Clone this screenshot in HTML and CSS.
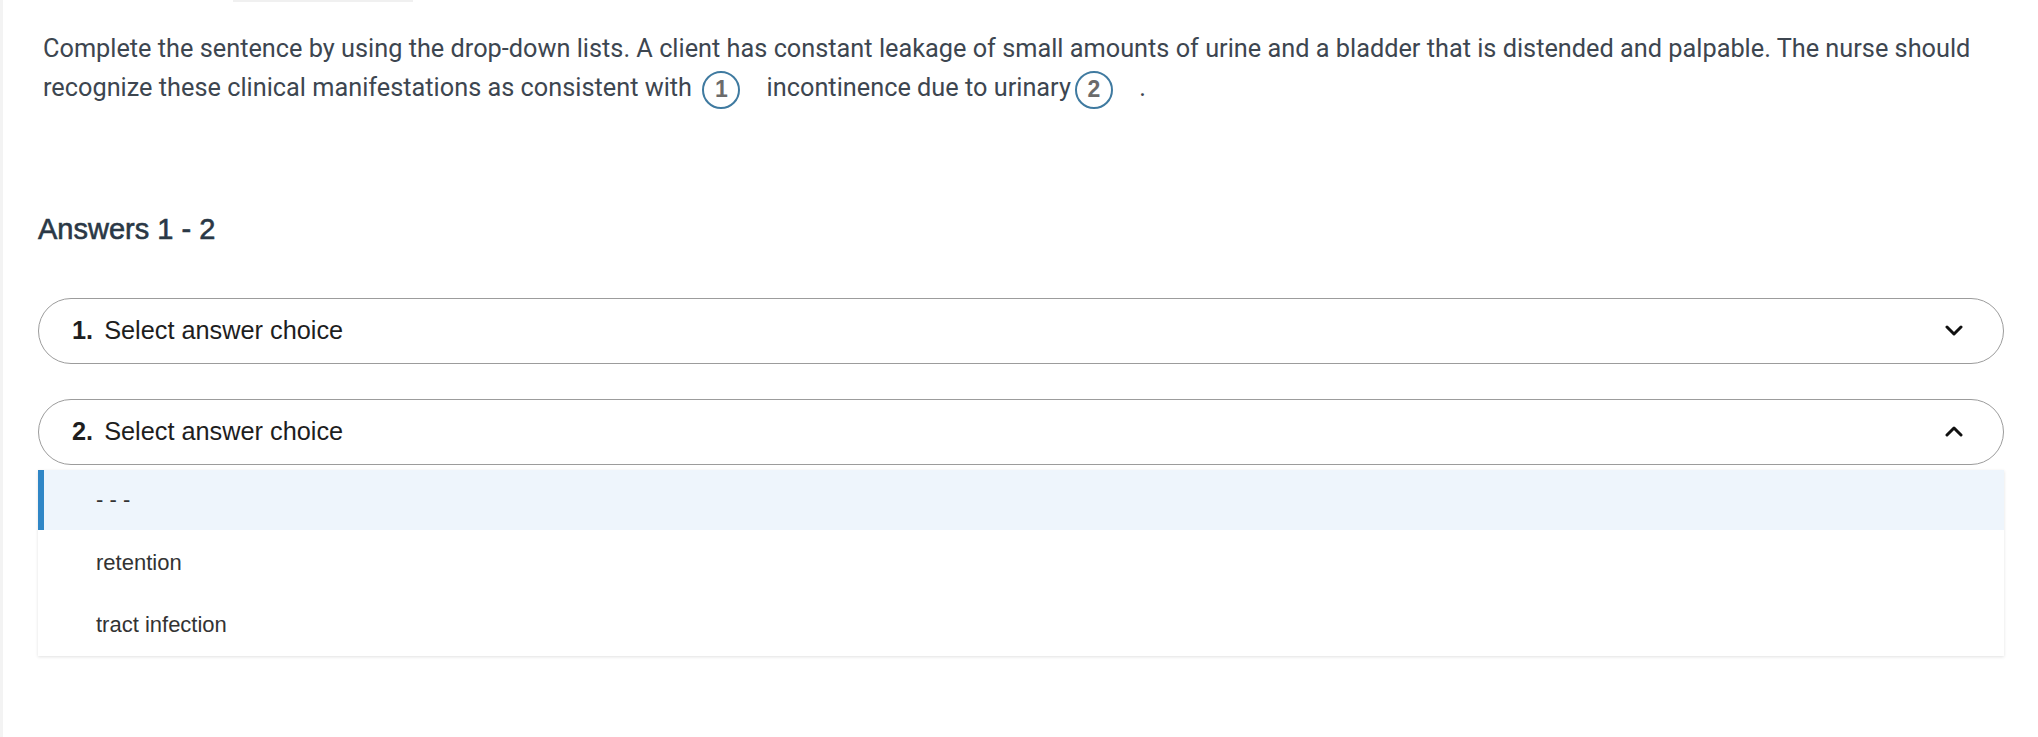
FILE: index.html
```html
<!DOCTYPE html>
<html lang="en">
<head>
<meta charset="utf-8">
<title>Drop-down question</title>
<link rel="stylesheet" href="styles.css">
</head>
<body>
<div class="page">
  <div class="topmark"></div>
  <p class="stem">Complete the sentence by using the drop-down lists. A client has constant leakage of small amounts of urine and a bladder that is distended and palpable. The nurse should recognize these clinical manifestations as consistent with <span class="blank"><span class="num">1</span></span> incontinence due to urinary<span class="blank"><span class="num">2</span></span> .</p>

  <h2 class="answers-title">Answers 1 - 2</h2>

  <div class="select">
    <span class="select-label"><b>1.</b> Select answer choice</span>
    <svg class="chev" width="18" height="11" viewBox="0 0 18 11"><path d="M2 2 L9 9 L16 2" fill="none" stroke="#111" stroke-width="3" stroke-linecap="round" stroke-linejoin="round"/></svg>
  </div>

  <div class="select select-open">
    <span class="select-label"><b>2.</b> Select answer choice</span>
    <svg class="chev" width="18" height="11" viewBox="0 0 18 11"><path d="M2 9 L9 2 L16 9" fill="none" stroke="#111" stroke-width="3" stroke-linecap="round" stroke-linejoin="round"/></svg>
  </div>
  <ul class="options">
    <li class="option option-active">- - -</li>
    <li class="option">retention</li>
    <li class="option">tract infection</li>
  </ul>
</div>
</body>
</html>
```

FILE: styles.css
```css
html, body {
  margin: 0;
  padding: 0;
  background: #ffffff;
}

.page {
  position: relative;
  min-height: 737px;
  box-sizing: border-box;
  padding: 29px 34px 0 35px;
  border-left: 3px solid #f3f3f3;
}

.topmark {
  position: absolute;
  top: 0;
  left: 230px;
  width: 180px;
  height: 2px;
  background: #f0f0f0;
}

.stem {
  margin: 0 0 0 5px;
  font-family: Roboto, "Noto Sans", sans-serif;
  font-size: 25.3px;
  line-height: 39px;
  color: #3d4650;
}

.blank {
  display: inline-block;
  width: 58px;
  margin-left: 4px;
  vertical-align: middle;
  height: 39px;
}

.num {
  display: flex;
  align-items: center;
  justify-content: center;
  width: 38px;
  height: 38px;
  box-sizing: border-box;
  border: 2px solid #3f7aa0;
  border-radius: 50%;
  font-family: "Liberation Sans", Arial, sans-serif;
  font-weight: bold;
  font-size: 23px;
  color: #6b6b6b;
  margin-top: 1px;
}

.answers-title {
  margin: 103px 0 0 0;
  font-family: "Liberation Sans", Arial, sans-serif;
  font-weight: normal;
  font-size: 29px;
  line-height: 34px;
  color: #2a3846;
  -webkit-text-stroke: 0.6px #2a3846;
}

.select {
  display: flex;
  align-items: center;
  justify-content: space-between;
  height: 66px;
  box-sizing: border-box;
  margin-top: 52px;
  padding: 0 40px 0 33px;
  border: 1.5px solid #9c9c9c;
  border-radius: 33px;
  font-family: "Liberation Sans", Arial, sans-serif;
  font-size: 25.3px;
  color: #1e1e1e;
}

.select + .select {
  margin-top: 35px;
}

.select-label b {
  margin-right: 4px;
}

.options {
  list-style: none;
  margin: 5px 0 0 0;
  padding: 0;
  box-shadow: 0 1px 3px rgba(0, 0, 0, 0.12);
  background: #fff;
}

.option {
  height: 62px;
  display: flex;
  align-items: center;
  padding-left: 58px;
  font-family: "Liberation Sans", Arial, sans-serif;
  font-size: 22px;
  color: #333;
}

.option-active {
  background: #eef5fc;
  border-left: 6px solid #2f86c6;
  padding-left: 52px;
  height: 60px;
  margin-bottom: 2px;
}
```
